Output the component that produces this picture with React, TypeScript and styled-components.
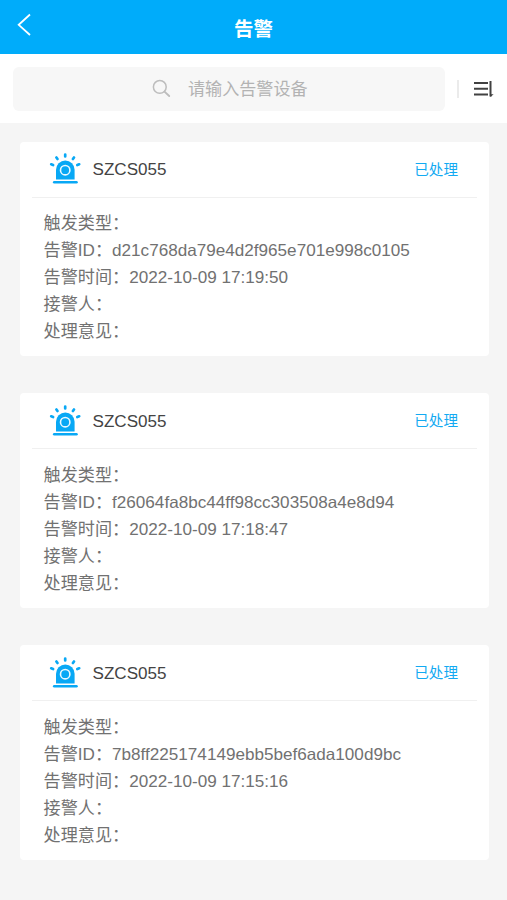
import React from 'react';
import styled, { createGlobalStyle } from 'styled-components';

const GlobalStyle = createGlobalStyle`
  * { box-sizing: border-box; }
  body {
    margin: 0;
    background: #f5f5f5;
    font-family: "Liberation Sans", "Noto Sans CJK SC", sans-serif;
  }
`;

const Page = styled.div`
  min-height: 900px;
  background: #f5f5f5;
`;

const Header = styled.header`
  display: grid;
  grid-template-columns: 60px 1fr 60px;
  height: 54px;
  background: #00acfa;
  color: #fff;
`;

const BackButton = styled.button`
  display: flex;
  align-items: flex-start;
  padding: 13px 0 0 16px;
  border: 0;
  background: none;
  color: inherit;
`;

const Title = styled.h1`
  margin: 0;
  text-align: center;
  font-size: 19.5px;
  font-weight: 700;
  line-height: 58px;
`;

const SearchBar = styled.div`
  display: flex;
  align-items: center;
  height: 69px;
  padding: 0 13px;
  background: #fff;
`;

const SearchField = styled.label`
  display: flex;
  align-items: center;
  width: 432px;
  height: 44px;
  padding-left: 139px;
  border-radius: 6px;
  background: #f7f7f7;
`;

const SearchInput = styled.input`
  width: 200px;
  margin-left: 17px;
  padding: 2px 0 0;
  border: 0;
  outline: 0;
  background: none;
  font: inherit;
  font-size: 17.1px;
  &::placeholder { color: #b3b3b3; opacity: 1; }
`;

const Separator = styled.span`
  width: 2px;
  height: 18px;
  margin-left: 12px;
  background: #ebebeb;
`;

const SortButton = styled.button`
  display: flex;
  margin-left: 14px;
  padding: 0;
  border: 0;
  background: none;
`;

const AlarmList = styled.main`
  display: flex;
  flex-direction: column;
  gap: 37.3px;
  padding: 18.7px 18.5px 40px 20px;
`;

const Card = styled.article`
  height: 214.5px;
  padding: 0 12px;
  border-radius: 4px;
  background: #fff;
`;

const CardHeader = styled.div`
  display: flex;
  align-items: center;
  height: 56px;
  padding: 0 18.5px 0 17px;
  border-bottom: 1px solid #f0f0f0;
`;

const Device = styled.span`
  margin-left: 11.5px;
  padding-top: 2px;
  color: #444;
  font-size: 17.07px;
`;

const Status = styled.span`
  margin-left: auto;
  padding-bottom: 2px;
  color: #12aaf2;
  font-size: 14.6px;
`;

const Details = styled.div`
  padding: 13.8px 0 0 11.6px;
`;

const Line = styled.div`
  height: 26.9px;
  color: #717171;
  font-size: 17.13px;
  line-height: 26.9px;
  white-space: nowrap;
`;

const BackIcon = () => (
  <svg width="16" height="24" viewBox="0 0 16 24" fill="none" stroke="#fff" strokeWidth="1.8">
    <path d="M14 1.5 2.7 11.8 14 22" />
  </svg>
);

const SearchIcon = () => (
  <svg width="19" height="19" viewBox="0 0 19 19" fill="none" stroke="#bdbdbd">
    <circle cx="7.8" cy="7.9" r="6.4" strokeWidth="1.5" />
    <path d="m12.5 12.6 4.7 4.4" strokeWidth="1.9" strokeLinecap="round" />
  </svg>
);

const SortIcon = () => (
  <svg width="21" height="18" viewBox="0 0 21 18" fill="none" stroke="#414141" strokeWidth="2">
    <path d="M1 3h14M1 8.8h14M1 14.4h14" />
    <path d="M17.5 1v15.5" />
    <path d="M17 14.2h3.6L17.5 17z" fill="#414141" stroke="none" />
  </svg>
);

const SirenIcon = () => (
  <svg width="32" height="32" viewBox="0 0.7 32 32" fill="none" stroke="#08a8f5">
    <path d="M7 27.2V17.5a9.3 9.3 0 0 1 18.6 0v9.7z" fill="#08a8f5" stroke="none" />
    <circle cx="16.2" cy="17.9" r="4.7" stroke="#e9f8ff" strokeWidth="1.6" />
    <path d="M5.2 29.9h22.3" strokeWidth="2.5" strokeLinecap="round" />
    <path
      d="M16.2 2.2v2M7.4 5.2l1.1 1.5M25 5.2l-1.1 1.5M2.2 12l1.9.7M30.2 12l-1.9.7"
      strokeWidth="2.7"
      strokeLinecap="round"
    />
  </svg>
);

const alarms = [
  { device: 'SZCS055', id: 'd21c768da79e4d2f965e701e998c0105', time: '2022-10-09 17:19:50' },
  { device: 'SZCS055', id: 'f26064fa8bc44ff98cc303508a4e8d94', time: '2022-10-09 17:18:47' },
  { device: 'SZCS055', id: '7b8ff225174149ebb5bef6ada100d9bc', time: '2022-10-09 17:15:16' },
];

export default function App() {
  return (
    <Page lang="zh-CN">
      <GlobalStyle />
      <Header>
        <BackButton aria-label="返回"><BackIcon /></BackButton>
        <Title>告警</Title>
      </Header>
      <SearchBar>
        <SearchField>
          <SearchIcon />
          <SearchInput placeholder="请输入告警设备" />
        </SearchField>
        <Separator />
        <SortButton aria-label="排序"><SortIcon /></SortButton>
      </SearchBar>
      <AlarmList>
        {alarms.map((alarm) => (
          <Card key={alarm.id}>
            <CardHeader>
              <SirenIcon />
              <Device>{alarm.device}</Device>
              <Status>已处理</Status>
            </CardHeader>
            <Details>
              <Line>触发类型：</Line>
              <Line>告警ID：{alarm.id}</Line>
              <Line>告警时间：{alarm.time}</Line>
              <Line>接警人：</Line>
              <Line>处理意见：</Line>
            </Details>
          </Card>
        ))}
      </AlarmList>
    </Page>
  );
}
